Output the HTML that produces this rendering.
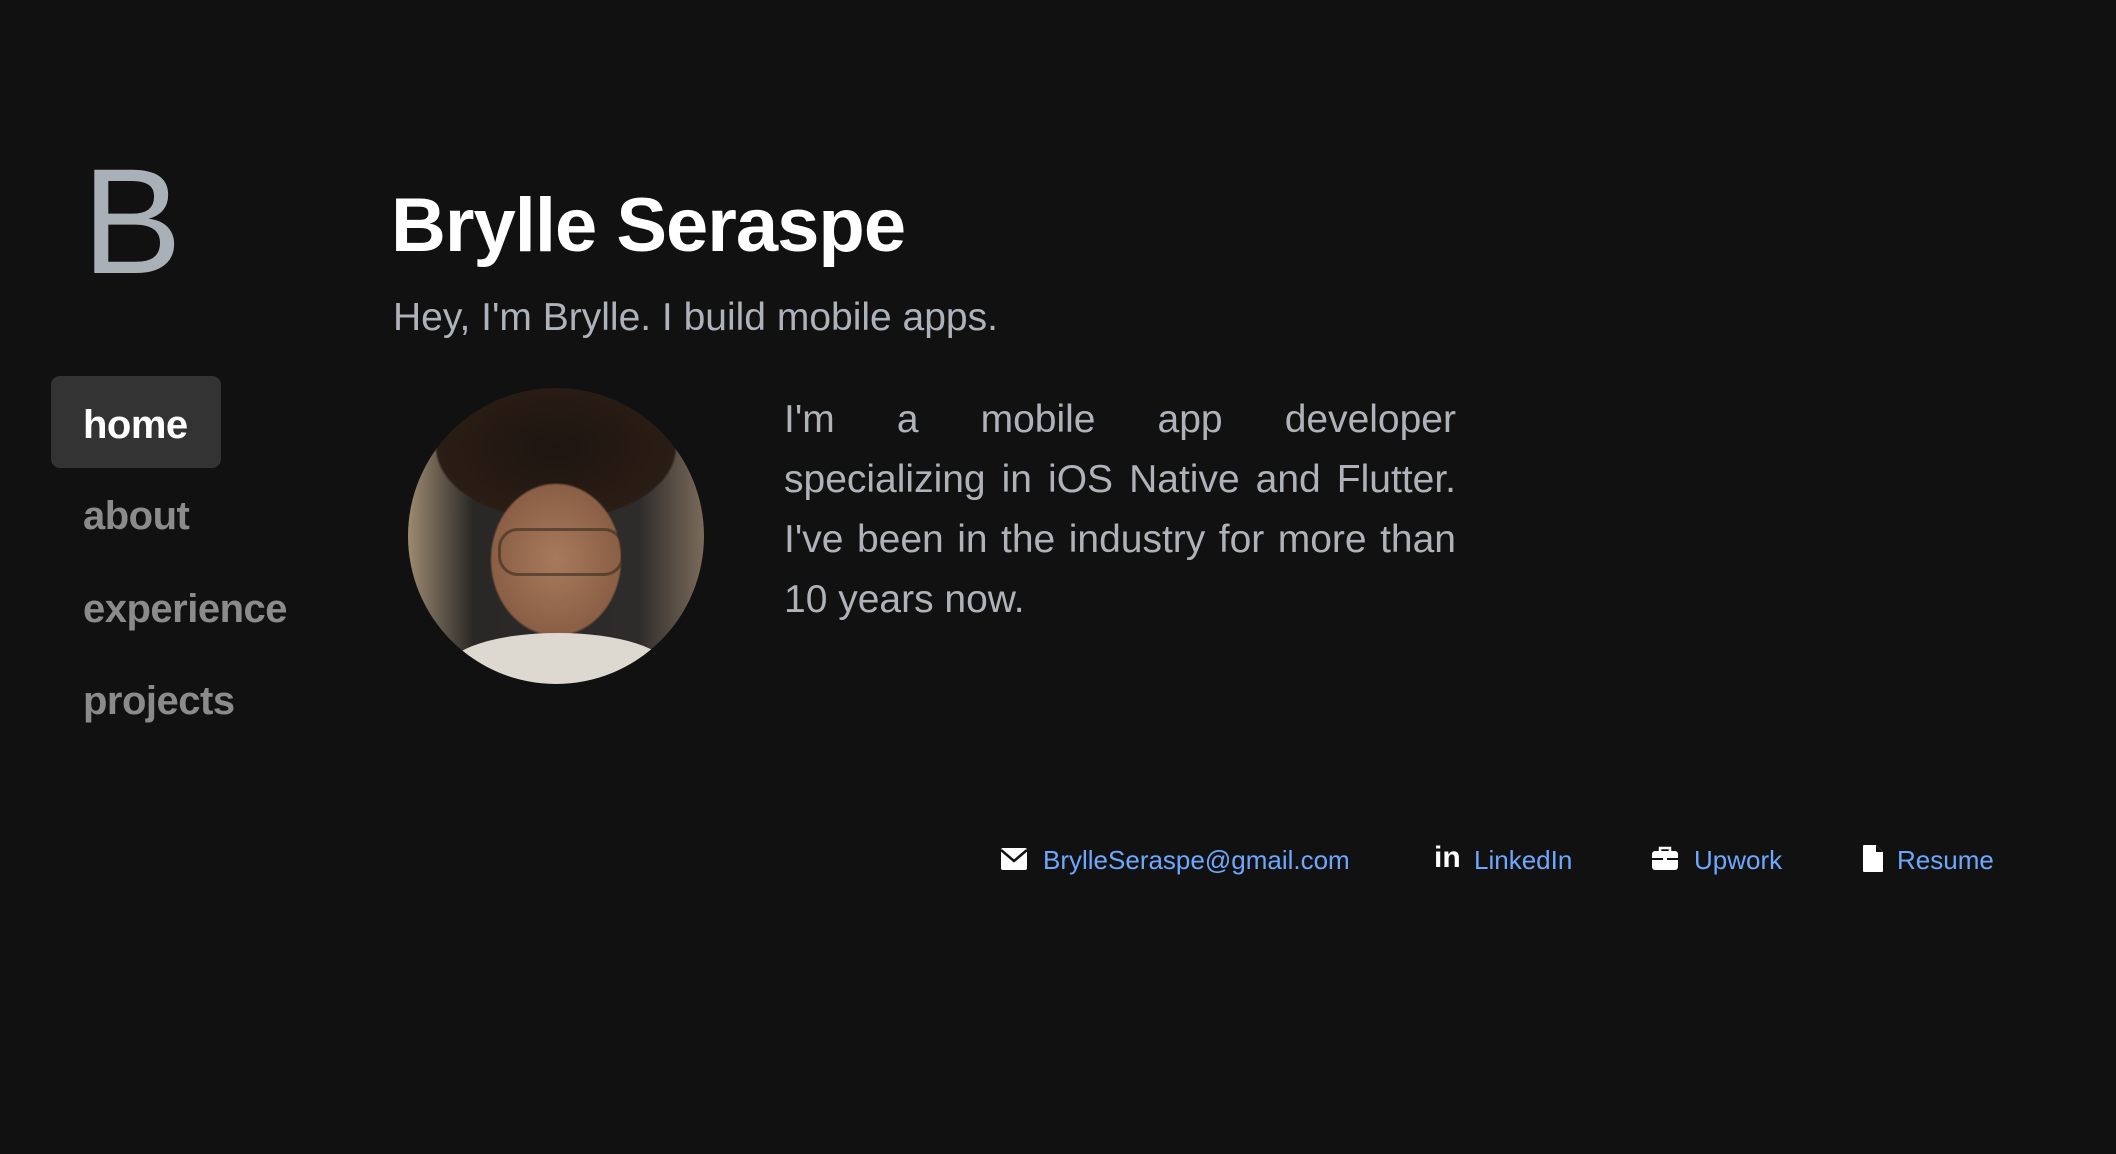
<!DOCTYPE html>
<html><head><meta charset="utf-8"><style>
body{margin:0;background:#111111;width:2116px;height:1154px;overflow:hidden;font-family:"Liberation Sans",sans-serif;position:relative}
.a{position:absolute;white-space:nowrap}
.logo{left:82px;top:146px;font-size:150px;color:#a9b0b8;font-weight:300;line-height:1}
.title{left:391px;top:188px;font-size:76px;color:#fff;font-weight:700;line-height:1;letter-spacing:-1px}
.sub{left:393px;top:298px;font-size:39px;color:#adb3ba;line-height:1;letter-spacing:0}
.homebox{left:51px;top:376px;width:170px;height:92px;background:#333;border-radius:9px}
.nav{font-size:40px;font-weight:700;line-height:1;color:#8b8b8b;left:83px;letter-spacing:-0.5px}
.photo{left:408px;top:388px;width:296px;height:296px;border-radius:50%;overflow:hidden;
background:radial-gradient(ellipse 36% 42% at 50% 58%,#a87a5c 0,#8a5f45 60%,transparent 62%),radial-gradient(ellipse 50% 30% at 50% 20%,#1e1510 0,#2a1d15 80%,transparent 82%),linear-gradient(90deg,#9c8a70 0,#2a2826 22%,#2e2c2a 78%,#7a6a5a 100%)}
.para{left:784px;top:390px;width:672px;font-size:39px;line-height:60px;color:#afb3b9;white-space:nowrap}
.para div{text-align:justify;text-align-last:justify;width:672px}
.para div.l{text-align-last:left}
.f{top:844px;font-size:26px;color:#6ea8fe;line-height:32px}
svg{position:absolute}
</style></head><body>
<div class="a logo">B</div>
<div class="a title">Brylle Seraspe</div>
<div class="a sub">Hey, I'm Brylle. I build mobile apps.</div>
<div class="a homebox"></div>
<div class="a nav" style="top:405px;color:#fff">home</div>
<div class="a nav" style="top:496px">about</div>
<div class="a nav" style="top:589px">experience</div>
<div class="a nav" style="top:681px">projects</div>
<div class="a photo"><div style="position:absolute;left:90px;top:140px;width:120px;height:42px;border:3px solid #3a2a22;border-radius:20px;opacity:.6"></div><div style="position:absolute;left:40px;top:245px;width:220px;height:70px;background:#ddd8d0;border-radius:50%"></div></div>
<div class="a para"><div>I'm a mobile app developer</div><div>specializing in iOS Native and Flutter.</div><div>I've been in the industry for more than</div><div class="l">10 years now.</div></div>
<svg style="left:1001px;top:848px" width="26" height="22" viewBox="0 0 26 22"><rect x="0" y="0" width="26" height="22" rx="2" fill="#fff"/><path d="M0 2 L13 13 L26 2" stroke="#111" stroke-width="2.5" fill="none"/></svg>
<div class="a f" style="left:1043px">BrylleSeraspe@gmail.com</div>
<div class="a" style="left:1434px;top:840px;font-size:30px;font-weight:700;color:#fff;line-height:36px">in</div>
<div class="a f" style="left:1474px">LinkedIn</div>
<svg style="left:1652px;top:846px" width="26" height="24" viewBox="0 0 26 24"><path d="M8 5V2h10v3" stroke="#fff" stroke-width="2.5" fill="none"/><rect x="0" y="5" width="26" height="19" rx="3" fill="#fff"/><rect x="0" y="12" width="26" height="2" fill="#111"/><rect x="11" y="11" width="4" height="4" fill="#fff"/></svg>
<div class="a f" style="left:1694px">Upwork</div>
<svg style="left:1863px;top:845px" width="20" height="27" viewBox="0 0 20 27"><path d="M0 1Q0 0 1 0H13L20 7V26Q20 27 19 27H1Q0 27 0 26Z" fill="#fff"/><path d="M13 0V7H20" fill="#111"/></svg>
<div class="a f" style="left:1897px">Resume</div>
</body></html>
